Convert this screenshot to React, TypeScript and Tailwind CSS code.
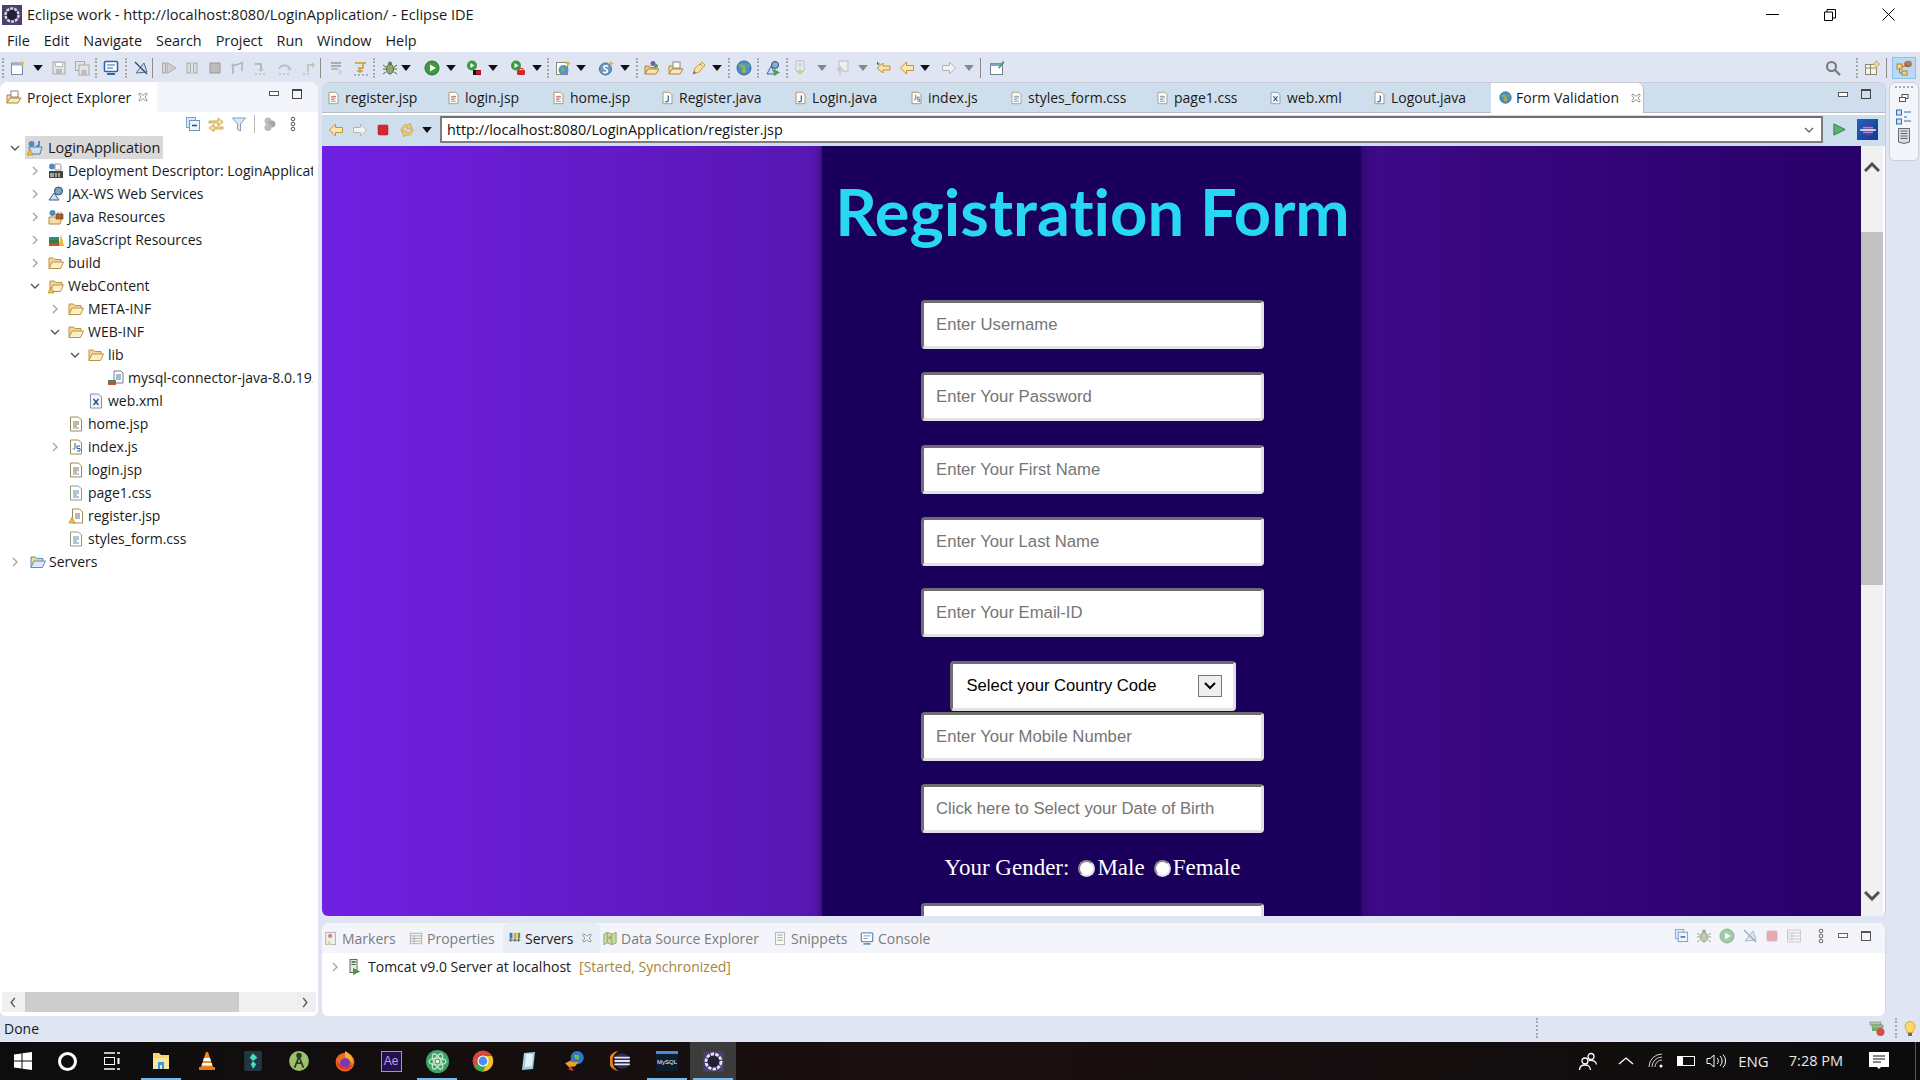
import React from "react";

// --- little eclipse icons, all on a 16x16 box ---
const icons: Record<string, React.ReactNode> = {
  newfile: (<><rect x="1.5" y="3" width="11" height="11.5" fill="#fff" stroke="#7a8ba8" /><rect x="1.5" y="3" width="11" height="2.5" fill="#8fb4dc" /><path d="M12 0.5l1 2 2 1-2 1-1 2-1-2-2-1 2-1z" fill="#e8b93a" /></>),
  save: (<><rect x="2" y="2" width="12" height="12" fill="#e4e4e4" stroke="#aaa" /><rect x="4.5" y="2.5" width="7" height="4" fill="#fff" stroke="#bbb" /><rect x="5" y="9" width="6" height="5" fill="#bbb" /></>),
  saveall: (<><rect x="1.5" y="1.5" width="9" height="9" fill="#e4e4e4" stroke="#aaa" /><rect x="5" y="5" width="10" height="10" fill="#e4e4e4" stroke="#aaa" /><rect x="7.5" y="10" width="5" height="5" fill="#bbb" /></>),
  monitor: (<><rect x="1.5" y="1.5" width="13" height="10" rx="1" fill="#fff" stroke="#2c6aa8" strokeWidth="1.6" /><path d="M4 5h8M4 8h6" stroke="#2c6aa8" /><path d="M4 14h8" stroke="#2c6aa8" strokeWidth="2" /></>),
  skip: (<><path d="M3 13L11 3l3 9z" fill="#cfd8e8" stroke="#4a6a96" /><path d="M2 2l12 12" stroke="#33507a" strokeWidth="1.4" /></>),
  resume: (<><rect x="1.5" y="3" width="3" height="10" fill="#d8d8d8" stroke="#aaa" /><path d="M6 2.5l9 5.5-9 5.5z" fill="#cfcfcf" stroke="#aaa" /></>),
  pause: (<><rect x="3" y="3" width="3.5" height="10" fill="#ddd" stroke="#aaa" /><rect x="9.5" y="3" width="3.5" height="10" fill="#ddd" stroke="#aaa" /></>),
  stopgray: (<rect x="3" y="3" width="10" height="10" fill="#bdbdbd" stroke="#999" />),
  disconnect: (<><path d="M3 14V6l9-3v8" fill="none" stroke="#aaa" strokeWidth="1.3" /><circle cx="3" cy="5" r="1.6" fill="#bbb" /><circle cx="12" cy="3" r="1.6" fill="#bbb" /></>),
  stepinto: (<><path d="M2 4h6v6" fill="none" stroke="#aaa" strokeWidth="1.5" /><path d="M5 9h6l-3 3z" fill="#b9c8b0" /><path d="M2 14h2M6 14h2M10 14h2" stroke="#aaa" /></>),
  stepover: (<><path d="M2 9a6 6 0 0 1 11 0" fill="none" stroke="#bbb" strokeWidth="1.6" /><path d="M10 8h5l-2.500 3z" fill="#b9c8b0" /><path d="M2 14h2M6 14h2M10 14h2" stroke="#aaa" /></>),
  stepret: (<><path d="M7 12V5h6" fill="none" stroke="#bbb" strokeWidth="1.5" /><path d="M11 2l3 3-3 3z" fill="#b9c8b0" /><path d="M2 14h2M6 14h2" stroke="#aaa" /></>),
  dropframe: (<><path d="M2 3h10M2 6h10" stroke="#999" strokeWidth="1.4" /><path d="M2 9h7" stroke="#aaa" strokeWidth="1.4" /><path d="M10 9l4 3-4 3z" fill="#c9d6c0" /></>),
  usefilter: (<><path d="M2 3h11l-3 0v5H5" fill="none" stroke="#c99a2e" strokeWidth="1.5" /><path d="M7 8v5M4 11h6" stroke="#c99a2e" strokeWidth="1.5" /><path d="M1 15h2M5 15h2M9 15h2M13 15h2" stroke="#5b7fb0" /></>),
  debug: (<><ellipse cx="8" cy="9" rx="3.500" ry="5" fill="#8faa6b" stroke="#4f6a3d" /><circle cx="8" cy="3.500" r="2" fill="#5f7c4b" /><path d="M1 5l3 2M15 5l-3 2M1 9h3M15 9h-3M1 14l3-2M15 14l-3-2" stroke="#4f6a3d" /></>),
  run: (<><circle cx="8" cy="8" r="7" fill="#3c9a3f" stroke="#1f6e26" /><path d="M6 4.500l6 3.500-6 3.500z" fill="#fff" /></>),
  runext: (<><circle cx="6" cy="5.500" r="5" fill="#3c9a3f" /><path d="M4.500 3l4 2.500-4 2.500z" fill="#fff" /><rect x="7" y="10" width="8" height="5" fill="#111" /><rect x="10" y="10.500" width="5" height="4" fill="#d12" /></>),
  runtool: (<><circle cx="6" cy="5.500" r="5" fill="#3c9a3f" /><path d="M4.500 3l4 2.500-4 2.500z" fill="#fff" /><rect x="7" y="10" width="8" height="5" rx="1" fill="#cf2a2a" /><path d="M9 10V8.500h4V10" fill="none" stroke="#cf2a2a" /></>),
  newweb: (<><rect x="1.500" y="2.500" width="11" height="12" fill="#fff" stroke="#8a8a6a" /><circle cx="8.500" cy="10" r="5" fill="#5a93c8" /><path d="M6 7l4 1-1 4-3-1z" fill="#79ad59" /><path d="M13 0.500l1 2 2 1-2 1-1 2-1-2-2-1 2-1z" fill="#e8b93a" /></>),
  newserv: (<><circle cx="7.500" cy="9" r="6" fill="#6c9ac6" stroke="#3f6f9e" /><path d="M10 6.500C8 5 5 6 6 8s4 1 3.500 3-3 2-4.500 1" fill="none" stroke="#fff" strokeWidth="1.600" /><path d="M13 0.500l1 2 2 1-2 1-1 2-1-2-2-1 2-1z" fill="#e8b93a" /></>),
  openproj: (<><path d="M1 14V6h4l1 1.500h6V10" fill="#f2cb7c" stroke="#b08432" /><path d="M1 14l3-5h11l-3 5z" fill="#f9e2ae" stroke="#b08432" /><circle cx="9" cy="3.500" r="2.500" fill="#6e5da8" /><circle cx="12" cy="6" r="2" fill="#5a9a4a" /></>),
  opentype: (<><path d="M1 14V6h4l1 1.500h6V10" fill="#f2dca0" stroke="#b08432" /><rect x="5" y="2" width="7" height="6" fill="#fff" stroke="#888" /><path d="M1 14l3-5h11l-3 5z" fill="#f9e9c0" stroke="#b08432" /></>),
  pen: (<><path d="M3 14l2-6 7-6 3 3-6 7z" fill="#f6e0b0" stroke="#c89a40" /><path d="M3 14l3-1.500L4.500 11z" fill="#666" /><path d="M10 4l2 2" stroke="#b38226" /></>),
  globe: (<><circle cx="8" cy="8" r="7" fill="#4f8ec4" stroke="#2c6a9e" /><path d="M4 4l5 1 1 4-3 2-1-3-3-1zM11 3l3 3-2 1z" fill="#7fb25a" /><circle cx="8" cy="11" r="2" fill="#c8a24a" /></>),
  searchweb: (<><path d="M2 14L6 6l4 8z" fill="#cfdcee" stroke="#3a6aa5" /><circle cx="10" cy="5" r="3.500" fill="#7fb0da" stroke="#446" /><path d="M9 9l6 3.500-6 3.500z" fill="#4aa34f" /></>),
  nextann: (<><path d="M3 1h8v10H3z" fill="#eee" stroke="#bbb" /><path d="M7 8v5M4 11l3 3 3-3" fill="none" stroke="#bfcf9f" strokeWidth="1.500" /><path d="M5 4h4M5 6h4" stroke="#bbb" /></>),
  prevann: (<><path d="M5 1h9v10H5z" fill="#eee" stroke="#bbb" /><path d="M6 15V8M3 10l3-3 3 3" fill="none" stroke="#c7c7c7" strokeWidth="1.500" /></>),
  lastedit: (<><path d="M2 8l6-5v3h7v4H8v3z" fill="#f9e3a5" stroke="#c49327" /><path d="M2 1l1 2 2 1-2 1-1-1z" fill="#2a5a98" /></>),
  back: (<path d="M1.500 8l6-6v3.500h7v5h-7V14z" fill="#f9e7b2" stroke="#c8952a" />),
  forward: (<path d="M14.500 8l-6-6v3.500h-7v5h7V14z" fill="#f2f2f2" stroke="#b5b5b5" />),
  pin: (<><rect x="1.500" y="3.500" width="12" height="11" fill="#fff" stroke="#6f7f94" /><rect x="1.500" y="3.500" width="12" height="2.500" fill="#7ba4d0" /><path d="M9 8l5-7 1.500 1.500-5 6z" fill="#4f9b4d" /></>),
  stopred: (<rect x="2.500" y="2.500" width="11" height="11" rx="1" fill="#d8262c" stroke="#a61b20" />),
  refresh: (<><path d="M2 9a6 6 0 0 1 8-6l1-2 2 5-5 1 1-2a4 4 0 0 0-5 4z" fill="#f2cd6c" stroke="#c8952a" strokeWidth=".6" /><path d="M14 7a6 6 0 0 1-8 6l-1 2-2-5 5-1-1 2a4 4 0 0 0 5-4z" fill="#f2cd6c" stroke="#c8952a" strokeWidth=".6" /></>),
  collapse: (<><rect x="1.500" y="1.500" width="9" height="10" fill="#dbe8f7" stroke="#7ba4d0" /><rect x="4.500" y="4.500" width="10" height="10" fill="#eef4fb" stroke="#6c96c4" /><path d="M7 9.500h5" stroke="#18508f" strokeWidth="1.500" /></>),
  link: (<><path d="M1 5h9V2l5 4-5 4V7H1z" fill="#f7e2a4" stroke="#c8952a" strokeWidth=".8" /><path d="M15 11H6V8.500L1 12l5 3.500V13h9z" fill="#f7e2a4" stroke="#c8952a" strokeWidth=".8" /></>),
  filter: (<path d="M1.500 2h13L9.500 8v7l-3-1.500V8z" fill="#dbe8f7" stroke="#7f9dc0" />),
  toggles: (<><circle cx="6" cy="5" r="3.500" fill="#bbb" /><circle cx="10" cy="8" r="3.500" fill="#a8a8a8" /><circle cx="6" cy="11.500" r="3.500" fill="#bbb" /></>),
  dots: (<><circle cx="8" cy="3" r="1.800" fill="none" stroke="#555" /><circle cx="8" cy="8" r="1.800" fill="none" stroke="#555" /><circle cx="8" cy="13" r="1.800" fill="none" stroke="#555" /></>),
  persp: (<><rect x="1.500" y="4.500" width="11" height="10" fill="#f6f3e4" stroke="#8a8a76" /><path d="M1.500 8h11M6.500 4.500v10" stroke="#8a8a76" /><path d="M12.500 0.500l1.500 2.500 2 1-2 1.500-1.500 2-1.500-2-2-1.500 2-1z" fill="#f2d785" stroke="#c49327" strokeWidth=".6" /></>),
  jee: (<><rect x="1" y="4" width="5" height="5" fill="#f3d48a" stroke="#b28324" /><rect x="6" y="11" width="5" height="4" fill="#f3d48a" stroke="#b28324" /><path d="M3.500 9v4H6M6 6.500h3" stroke="#b28324" fill="none" /><ellipse cx="12" cy="4" rx="3.800" ry="3.200" fill="#a8653c" /><path d="M9.500 2l5 4M11 1l4 3" stroke="#e1bd9f" strokeWidth=".6" /></>),
  file: (<><path d="M2.500 1h8l3 3v11h-11z" fill="#fff" stroke="#9a8a5a" /><path d="M5 6h6" stroke="#c74a4a" /><path d="M5 8h6" stroke="#5b8a4a" /><path d="M5 10h4" stroke="#5070b0" /><path d="M5 12h6" stroke="#888" /></>),
  css: (<><path d="M2.500 1h8l3 3v11h-11z" fill="#fff" stroke="#8f9a7a" /><path d="M5 6h6M5 8h6M5 10h4M5 12h6" stroke="#6d8aa8" /></>),
  java: (<><path d="M2.500 1h8l3 3v11h-11z" fill="#fff" stroke="#9a8a5a" /><path d="M9 5v6c0 2-3 2-3.500 1" fill="none" stroke="#2c5a9e" strokeWidth="1.500" /></>),
  js: (<><path d="M2.500 1h8l3 3v11h-11z" fill="#fff" stroke="#9a8a5a" /><path d="M7 4v5c0 1.500-2 1.500-2 .5" fill="none" stroke="#2c5a9e" /><path d="M12 7H9v2.500h3V12H9" fill="none" stroke="#2c5a9e" /></>),
  xml: (<><path d="M2.500 1h8l3 3v11h-11z" fill="#f2f5fa" stroke="#7f90ad" /><path d="M5.500 6l5 6M10.500 6l-5 6" stroke="#2c4670" strokeWidth="1.300" /></>),
  folder: (<><path d="M1 13.500V3h4.500L7 4.500h6V7" fill="#f3d594" stroke="#bd9444" /><path d="M1 13.500L4 7h11.500l-3 6.500z" fill="#fbeec9" stroke="#bd9444" /></>),
  folderwarn: (<><path d="M2 13.500V3h4.500L8 4.500h6V7" fill="#f3d594" stroke="#bd9444" /><path d="M2 13.500L5 7h10.500l-3 6.500z" fill="#fbeec9" stroke="#bd9444" /><path d="M3 9l3 6H0z" fill="#f1c233" stroke="#a8801c" strokeWidth=".6" /></>),
  folderserv: (<><path d="M1 13.500V3h4.500L7 4.500h6V7" fill="#f3d594" stroke="#5e8dc2" /><path d="M1 13.500L4 7h11.500l-3 6.500z" fill="#dbe8f7" stroke="#5e8dc2" /></>),
  project: (<><path d="M2 7h13l-2 7H3z" fill="#cfe0f4" stroke="#4f7fb8" /><circle cx="4.500" cy="4" r="3" fill="#4f8ec4" /><path d="M12 1v4c0 1.500-2 1.500-2.500.5" fill="none" stroke="#2c5a9e" strokeWidth="1.300" /><path d="M3 9l3 6H0z" fill="#f1c233" stroke="#a8801c" strokeWidth=".6" /></>),
  dd: (<><circle cx="4" cy="3.500" r="3" fill="#4f8ec4" /><path d="M7 1h5l1 2v4H7z" fill="#fff" stroke="#999" /><rect x="1" y="8" width="14" height="7" fill="#444" /><path d="M3 10v4M5 10v4M8 10v4M11 10v4" stroke="#fff" /></>),
  jaxws: (<><path d="M1 14L6 7l5 7z" fill="#cfdcee" stroke="#3a5a95" /><circle cx="10.500" cy="5" r="4" fill="#6fa6d4" stroke="#446" /><path d="M9 3l3 1-1 3z" fill="#86b860" /></>),
  javares: (<><circle cx="4.500" cy="4" r="3" fill="#4f8ec4" /><path d="M1 8h13l-2 7H1z" fill="#f5dfa8" stroke="#b58a36" /><path d="M8 5h7v5H8zM10 3v7M13 3v7" fill="#b5702c" stroke="#6e3f14" strokeWidth=".7" /></>),
  jsres: (<><path d="M1 5h10v3H1z" fill="#2b8f89" /><path d="M1 8h10v3H1z" fill="#3a7a3a" /><path d="M1 11h11v3H1z" fill="#c4532c" /><path d="M11 14l2-12 3 12z" fill="#e6b83c" /></>),
  jar: (<><path d="M6 1h7l2 2v10H6z" fill="#fff" stroke="#7a7a7a" /><path d="M8 5h5M8 7h5M8 9h5" stroke="#5070b0" /><path d="M0 10h8v2H0z" fill="#2b8f89" /><path d="M0 12h8v3H0z" fill="#c4532c" /></>),
  jspwarn: (<><path d="M4.500 1h7l3 3v11h-10z" fill="#fff" stroke="#9a8a5a" /><path d="M7 6h5" stroke="#c74a4a" /><path d="M7 8h5" stroke="#5b8a4a" /><path d="M7 10h5" stroke="#5070b0" /><path d="M4 9l3 6H1z" fill="#f1c233" stroke="#a8801c" strokeWidth=".6" /></>),
  markers: (<><rect x="2" y="1" width="11" height="14" fill="#f0f0f0" stroke="#aaa" /><circle cx="7" cy="5" r="2.500" fill="#d88" /><path d="M6 9l3 6H3z" fill="#ecd38a" /></>),
  props: (<><rect x="1.500" y="2" width="13" height="12" fill="#f4f4f4" stroke="#aaa" /><path d="M1.500 5h13M1.500 8h13M1.500 11h13M6 5v9" stroke="#aaa" /></>),
  servers: (<><rect x="2" y="1" width="3.500" height="7" fill="#3a78b8" /><rect x="7" y="1" width="3.500" height="7" fill="#d9a531" /><rect x="12" y="1" width="3" height="7" fill="#5b9a4a" /><path d="M1 10h14M3.500 8v4M8.500 8v4M13 8v4" stroke="#444" /></>),
  dse: (<><path d="M1 3l4-2 5 2 5-2v12l-5 2-5-2-4 2z" fill="#c4dca0" stroke="#8aa36a" /><path d="M5 1v12M10 3v12" stroke="#8aa36a" /><circle cx="8" cy="7" r="2" fill="#b8a36a" /></>),
  snippets: (<><rect x="3" y="1" width="10" height="14" fill="#fafafa" stroke="#aaa" /><path d="M5 4h6" stroke="#6c9ac6" /><path d="M5 7h6" stroke="#c8953a" /><path d="M5 10h6" stroke="#79a35b" /></>),
  console: (<><rect x="1.500" y="1.500" width="13" height="10" rx="1" fill="#fff" stroke="#6b93bd" strokeWidth="1.500" /><path d="M4 5h8M4 8h5" stroke="#6b93bd" /><path d="M4 14h8" stroke="#6b93bd" strokeWidth="2" /></>),
  tomcat: (<><rect x="4" y="0.500" width="7" height="13" fill="#e8e8e8" stroke="#666" /><rect x="5.500" y="2" width="4" height="2" fill="#3c9a3f" /><rect x="5.500" y="5" width="4" height="1" fill="#555" /><path d="M7 9l7 3.500L7 16z" fill="#3c9a3f" /></>),
};

function Ic({ n, cls = "w-4 h-4" }: { n: string; cls?: string }) {
  return (
    <svg viewBox="0 0 16 16" className={`${cls} shrink-0`}>
      {icons[n]}
    </svg>
  );
}

function Caret({ gray }: { gray?: boolean }) {
  return (
    <svg viewBox="0 0 8 5" className="w-[10px] h-[6px] shrink-0">
      <path d="M0 0h8L4 5z" fill={gray ? "#888" : "#111"} />
    </svg>
  );
}

function Grip() {
  return <div className="h-[20px] w-0 border-l-2 border-dotted border-[#a9a9a9] shrink-0" />;
}

function Sep() {
  return <div className="h-[20px] w-px bg-[#8d8d8d] shrink-0" />;
}

function MinMax() {
  return (
    <div className="flex items-center gap-[13px]">
      <div className="w-[10px] h-[5px] border border-[#555] bg-white" />
      <div className="w-[10px] h-[10px] border border-[#444] border-t-[2px]" />
    </div>
  );
}

function CloseX({ cls = "" }: { cls?: string }) {
  return (
    <svg viewBox="0 0 10 10" className={`w-[10px] h-[10px] shrink-0 ${cls}`}>
      <path d="M1.500 1l2 1L5 3.500 6.500 2l2-1 .5 1.500-2 2.500 2 2.500L8.500 9l-2-1L5 6.500 3.500 8l-2 1L1 7.500l2-2.500L1 2.500z" fill="#fff" stroke="#777" strokeWidth=".8" />
    </svg>
  );
}

function Chevron({ open }: { open?: boolean }) {
  return (
    <svg viewBox="0 0 10 10" className="w-[10px] h-[10px] shrink-0">
      <path d={open ? "M1 3l4 4 4-4" : "M3 1l4 4-4 4"} fill="none" stroke={open ? "#555" : "#a5a5a5"} strokeWidth="1.400" />
    </svg>
  );
}

const tree: { t: string; i: string; d: number; a?: "o" | "c" }[] = [
  { t: "Deployment Descriptor: LoginApplication", i: "dd", d: 1, a: "c" },
  { t: "JAX-WS Web Services", i: "jaxws", d: 1, a: "c" },
  { t: "Java Resources", i: "javares", d: 1, a: "c" },
  { t: "JavaScript Resources", i: "jsres", d: 1, a: "c" },
  { t: "build", i: "folder", d: 1, a: "c" },
  { t: "WebContent", i: "folderwarn", d: 1, a: "o" },
  { t: "META-INF", i: "folder", d: 2, a: "c" },
  { t: "WEB-INF", i: "folder", d: 2, a: "o" },
  { t: "lib", i: "folder", d: 3, a: "o" },
  { t: "mysql-connector-java-8.0.19.jar", i: "jar", d: 4 },
  { t: "web.xml", i: "xml", d: 3 },
  { t: "home.jsp", i: "file", d: 2 },
  { t: "index.js", i: "js", d: 2, a: "c" },
  { t: "login.jsp", i: "file", d: 2 },
  { t: "page1.css", i: "css", d: 2 },
  { t: "register.jsp", i: "jspwarn", d: 2 },
  { t: "styles_form.css", i: "css", d: 2 },
];

const depthPad: Record<number, string> = { 1: "pl-[30px]", 2: "pl-[50px]", 3: "pl-[70px]", 4: "pl-[90px]" };

const editorTabs: { t: string; i: string; w: string }[] = [
  { t: "register.jsp", i: "file", w: "w-[120px]" },
  { t: "login.jsp", i: "file", w: "w-[105px]" },
  { t: "home.jsp", i: "file", w: "w-[109px]" },
  { t: "Register.java", i: "java", w: "w-[133px]" },
  { t: "Login.java", i: "java", w: "w-[116px]" },
  { t: "index.js", i: "js", w: "w-[100px]" },
  { t: "styles_form.css", i: "css", w: "w-[146px]" },
  { t: "page1.css", i: "css", w: "w-[113px]" },
  { t: "web.xml", i: "xml", w: "w-[104px]" },
  { t: "Logout.java", i: "java", w: "w-[122px]" },
];

function FormInput({ ph, cls }: { ph: string; cls: string }) {
  return (
    <input
      readOnly
      placeholder={ph}
      className={`w-[343px] h-[49px] shrink-0 bg-white rounded-[4px] border-[3px] border-t-[#6e6e6e] border-l-[#6e6e6e] border-r-[#e2e2e2] border-b-[#e2e2e2] px-[12px] text-[16.700px] placeholder:text-[#757575] font-['Liberation_Sans',sans-serif] ${cls}`}
    />
  );
}

function Radio() {
  return <div className="w-[17px] h-[17px] rounded-full bg-white border-[2px] border-[#8c8c8c] border-r-[#dedede] border-b-[#dedede] shrink-0" />;
}

function Toolbar() {
  return (
    <div className="h-[30px] shrink-0 flex items-center pl-[2px] pr-[4px] pt-[1px]">
      <Grip />
      <div className="ml-[6px] w-[23px]"><Ic n="newfile" /></div>
      <Caret />
      <div className="ml-[8px] w-[23px]"><Ic n="save" /></div>
      <div className="w-[21px]"><Ic n="saveall" /></div>
      <Grip />
      <div className="ml-[6px] w-[22px]"><Ic n="monitor" /></div>
      <Grip />
      <div className="ml-[6px] w-[19px]"><Ic n="skip" /></div>
      <Sep />
      <div className="ml-[8px] w-[23px]"><Ic n="resume" /></div>
      <div className="w-[23px]"><Ic n="pause" /></div>
      <div className="w-[23px]"><Ic n="stopgray" /></div>
      <div className="w-[23px]"><Ic n="disconnect" /></div>
      <div className="w-[24px]"><Ic n="stepinto" /></div>
      <div className="w-[24px]"><Ic n="stepover" /></div>
      <div className="w-[19px]"><Ic n="stepret" /></div>
      <Sep />
      <div className="ml-[8px] w-[24px]"><Ic n="dropframe" /></div>
      <div className="w-[20px]"><Ic n="usefilter" /></div>
      <Grip />
      <div className="ml-[7px] w-[19px]"><Ic n="debug" /></div>
      <Caret />
      <div className="ml-[13px] w-[22px]"><Ic n="run" /></div>
      <Caret />
      <div className="ml-[10px] w-[22px]"><Ic n="runext" /></div>
      <Caret />
      <div className="ml-[12px] w-[22px]"><Ic n="runtool" /></div>
      <Caret />
      <div className="ml-[5px]"><Grip /></div>
      <div className="ml-[6px] w-[21px]"><Ic n="newweb" /></div>
      <Caret />
      <div className="ml-[12px] w-[22px]"><Ic n="newserv" /></div>
      <Caret />
      <div className="ml-[6px]"><Grip /></div>
      <div className="ml-[6px] w-[24px]"><Ic n="openproj" /></div>
      <div className="w-[22px]"><Ic n="opentype" /></div>
      <div className="w-[22px]"><Ic n="pen" /></div>
      <Caret />
      <div className="ml-[6px]"><Grip /></div>
      <div className="ml-[6px] w-[21px]"><Ic n="globe" /></div>
      <Grip />
      <div className="ml-[6px] w-[21px]"><Ic n="searchweb" /></div>
      <Grip />
      <div className="ml-[5px] w-[24px]"><Ic n="nextann" /></div>
      <Caret gray />
      <div className="ml-[7px] w-[24px]"><Ic n="prevann" /></div>
      <Caret gray />
      <div className="ml-[7px] w-[24px]"><Ic n="lastedit" /></div>
      <div className="w-[21px]"><Ic n="back" /></div>
      <Caret />
      <div className="ml-[11px] w-[23px]"><Ic n="forward" /></div>
      <Caret gray />
      <div className="ml-[6px]"><Sep /></div>
      <div className="ml-[8px]"><Ic n="pin" /></div>
      <div className="flex-1" />
      <svg viewBox="0 0 16 16" className="w-[16px] h-[16px] mr-[15px]">
        <circle cx="6.500" cy="6.500" r="4.500" fill="none" stroke="#777" strokeWidth="2" />
        <path d="M10 10l5 5" stroke="#777" strokeWidth="2.200" />
      </svg>
      <Grip />
      <div className="ml-[6px] mr-[6px]"><Ic n="persp" /></div>
      <Sep />
      <div className="ml-[5px] w-[24px] h-[22px] flex items-center justify-center bg-[#b9daf7] border border-[#8fc0ee]">
        <Ic n="jee" />
      </div>
    </div>
  );
}

function ProjectExplorer() {
  return (
    <div className="w-[318px] shrink-0 bg-white rounded-t-[8px] rounded-b-[6px] flex flex-col overflow-hidden">
      <div className="h-[30px] shrink-0 bg-[#f3f5fb] flex items-center">
        <div className="h-full w-[157px] bg-white rounded-tl-[8px] flex items-center pl-[6px] gap-[5px]">
          <Ic n="opentype" />
          <span className="text-[#1a1a1a]">Project Explorer</span>
          <CloseX cls="ml-[2px]" />
        </div>
        <div className="flex-1" />
        <div className="mr-[16px] pb-[7px]"><MinMax /></div>
      </div>
      <div className="h-[24px] shrink-0 flex items-center justify-end gap-[7px] pr-[17px]">
        <Ic n="collapse" />
        <Ic n="link" />
        <Ic n="filter" />
        <div className="h-[18px] w-px bg-[#bbb]" />
        <Ic n="toggles" />
        <Ic n="dots" />
      </div>
      <div className="flex-1 min-h-0 overflow-hidden pr-[5px]">
        <div className="h-[23px] flex items-center pl-[10px]">
          <Chevron open />
          <div className="ml-[5px] h-[23px] flex items-center gap-[5px] bg-[#d9d9d9] pr-[3px] pl-[2px]">
            <Ic n="project" />
            <span className="text-[14.500px] text-[#1a1a1a]">LoginApplication</span>
          </div>
        </div>
        {tree.map((row) => (
          <div key={row.t} className={`h-[23px] flex items-center whitespace-nowrap overflow-hidden ${depthPad[row.d]}`}>
            <div className="w-[18px] shrink-0">
              {row.a ? <Chevron open={row.a === "o"} /> : null}
            </div>
            <Ic n={row.i} />
            <span className="ml-[4px] text-[#1a1a1a]">{row.t}</span>
          </div>
        ))}
        <div className="h-[23px] flex items-center pl-[10px]">
          <div className="w-[20px]"><Chevron /></div>
          <Ic n="folderserv" />
          <span className="ml-[3px] text-[#1a1a1a]">Servers</span>
        </div>
      </div>
      <div className="h-[20px] shrink-0 mx-[2px] mb-[4px] bg-[#f0f0f0] flex items-center justify-between">
        <svg viewBox="0 0 8 12" className="w-[8px] h-[11px] ml-[7px]"><path d="M6 1L2 6l4 5" fill="none" stroke="#555" strokeWidth="1.500" /></svg>
        <div className="h-full w-[214px] bg-[#cdcdcd] ml-[8px] mr-auto" />
        <svg viewBox="0 0 8 12" className="w-[8px] h-[11px] mr-[7px]"><path d="M2 1l4 5-4 5" fill="none" stroke="#555" strokeWidth="1.500" /></svg>
      </div>
    </div>
  );
}

function BrowserPage() {
  return (
    <div className="flex-1 min-h-0 flex overflow-hidden mr-[2px]">
      <div className="flex-1 min-w-0 overflow-hidden flex justify-center bg-gradient-to-r from-[#7020e2] via-[#4b1199] to-[#270068]">
        <div className="w-[539px] shrink-0 h-[900px] pl-[2px] bg-[#1a005c] shadow-[0_0_10px_rgba(20,0,60,0.75)] flex flex-col items-center">
          <h1 className="mt-[23px] h-[84px] text-[65px] leading-[84px] font-bold text-[#28d7f4] [font-variant-ligatures:none] font-['Lato',sans-serif]">Registration Form</h1>
          <FormInput ph="Enter Username" cls="mt-[47px]" />
          <FormInput ph="Enter Your Password" cls="mt-[23px]" />
          <FormInput ph="Enter Your First Name" cls="mt-[24px]" />
          <FormInput ph="Enter Your Last Name" cls="mt-[23px]" />
          <FormInput ph="Enter Your Email-ID" cls="mt-[22px]" />
          <div className="mt-[24px] w-[286px] h-[50px] shrink-0 bg-white rounded-[4px] border-[3px] border-t-[#6e6e6e] border-l-[#6e6e6e] border-r-[#e2e2e2] border-b-[#e2e2e2] flex items-center pl-[14px] pr-[11px] justify-between text-[16.600px] text-black font-['Liberation_Sans',sans-serif]">
            <span>Select your Country Code</span>
            <div className="w-[24px] h-[22px] bg-[#efefef] border border-[#767676] flex items-center justify-center">
              <svg viewBox="0 0 12 8" className="w-[12px] h-[8px]"><path d="M1 1l5 5 5-5" fill="none" stroke="#000" strokeWidth="2" /></svg>
            </div>
          </div>
          <FormInput ph="Enter Your Mobile Number" cls="mt-[1px]" />
          <FormInput ph="Click here to Select your Date of Birth" cls="mt-[23px]" />
          <div className="mt-[20px] h-[30px] flex items-center text-white text-[23px] font-['Liberation_Serif',serif]">
            <span>Your Gender:</span>
            <div className="ml-[9px]"><Radio /></div>
            <span className="ml-[2px]">Male</span>
            <div className="ml-[9px]"><Radio /></div>
            <span className="ml-[2px]">Female</span>
          </div>
          <FormInput ph="" cls="mt-[20px]" />
        </div>
      </div>
      <div className="w-[22px] shrink-0 bg-[#f1f1f1] flex flex-col items-center">
        <div className="h-[40px] shrink-0 flex items-center justify-center pt-[2px]">
          <svg viewBox="0 0 16 10" className="w-[16px] h-[10px]"><path d="M1 9l7-7 7 7" fill="none" stroke="#505050" strokeWidth="3" /></svg>
        </div>
        <div className="mt-[46px] h-[353px] w-full bg-[#c1c1c1] shrink-0" />
        <div className="flex-1" />
        <div className="h-[40px] shrink-0 flex items-center justify-center">
          <svg viewBox="0 0 16 10" className="w-[16px] h-[10px]"><path d="M1 1l7 7 7-7" fill="none" stroke="#505050" strokeWidth="3" /></svg>
        </div>
      </div>
    </div>
  );
}

function EditorArea() {
  return (
    <div className="h-[834px] shrink-0 bg-white border-t border-[#c8cdd8] border-r border-r-[#c8cdd8] rounded-t-[8px] rounded-b-[6px] flex flex-col overflow-hidden">
      <div className="h-[30px] shrink-0 bg-[#cfdeed] flex items-center border-b border-[#b4bdc9]">
        <div className="w-[1px]" />
        {editorTabs.map((tab) => (
          <div key={tab.t} className={`${tab.w} h-full flex items-center gap-[5px] shrink-0 pl-[4px]`}>
            <Ic n={tab.i} cls="w-[13px] h-[14px]" />
            <span className="text-[#1a1a1a]">{tab.t}</span>
          </div>
        ))}
        <div className="w-[153px] h-[30px] bg-white border-r border-[#b4bdc9] rounded-tr-[6px] flex items-center pl-[8px] gap-[4px] shrink-0">
          <Ic n="globe" cls="w-[13px] h-[13px]" />
          <span className="text-[#1a1a1a]">Form Validation</span>
          <CloseX cls="ml-[8px]" />
        </div>
        <div className="flex-1" />
        <div className="mr-[14px] pb-[7px]"><MinMax /></div>
      </div>
      <div className="h-[33px] shrink-0 bg-[#cfdeed] flex items-center pl-[6px] pr-[6px] pb-[2px] border-t-[2px] border-white">
        <Ic n="back" />
        <div className="ml-[8px]"><Ic n="forward" /></div>
        <div className="ml-[8px]"><Ic n="stopred" cls="w-[14px] h-[14px]" /></div>
        <div className="ml-[9px]"><Ic n="refresh" /></div>
        <div className="ml-[7px]"><Caret /></div>
        <div className="ml-[8px] w-[1383px] h-[27px] shrink-0 bg-white border-2 border-[#7d7d7d] border-t-[#6f6f6f] flex items-center justify-between pl-[5px] pr-[7px]">
          <span className="text-[14.400px] text-[#111]">http://localhost:8080/LoginApplication/register.jsp</span>
          <svg viewBox="0 0 10 6" className="w-[10px] h-[6px]"><path d="M1 1l4 4 4-4" fill="none" stroke="#555" strokeWidth="1.200" /></svg>
        </div>
        <svg viewBox="0 0 16 16" className="ml-[9px] w-[15px] h-[15px] shrink-0"><path d="M2 2l12 6-12 6z" fill="#5cb36b" stroke="#2f8040" /></svg>
        <div className="ml-[10px] w-[21px] h-[21px] bg-gradient-to-br from-[#1f63c4] to-[#123a8e] flex items-center justify-center shrink-0">
          <svg viewBox="0 0 16 16" className="w-[18px] h-[18px]">
            <circle cx="8" cy="8" r="5" fill="#5b3f97" />
            <path d="M3.500 6h9M3.500 10h9" stroke="#c9b8e8" strokeWidth=".8" />
            <path d="M1 8h14" stroke="#fff" strokeWidth="1.300" />
          </svg>
        </div>
      </div>
      <BrowserPage />
    </div>
  );
}

const bottomTabs: { t: string; i: string; w: string }[] = [
  { t: "Markers", i: "markers", w: "w-[85px]" },
  { t: "Properties", i: "props", w: "w-[94px]" },
];

const bottomTabsRight: { t: string; i: string; w: string }[] = [
  { t: "Data Source Explorer", i: "dse", w: "w-[170px]" },
  { t: "Snippets", i: "snippets", w: "w-[87px]" },
  { t: "Console", i: "console", w: "w-[80px]" },
];

function ServersPanel() {
  return (
    <div className="mt-[7px] flex-1 min-h-0 bg-white rounded-t-[8px] rounded-b-[6px] border-r border-[#d5dae5] flex flex-col overflow-hidden">
      <div className="h-[30px] shrink-0 bg-[#f3f5fb] flex items-center pl-[2px]">
        {bottomTabs.map((tab) => (
          <div key={tab.t} className={`${tab.w} flex items-center gap-[4px] shrink-0`}>
            <Ic n={tab.i} cls="w-[14px] h-[15px]" />
            <span className="text-[#7b7b7b]">{tab.t}</span>
          </div>
        ))}
        <div className="w-[97px] h-full bg-[#e8eef5] rounded-t-[6px] flex items-center gap-[4px] pl-[5px] shrink-0">
          <Ic n="servers" cls="w-[13px] h-[13px]" />
          <span className="text-[#1a1a1a]">Servers</span>
          <CloseX cls="ml-[4px]" />
        </div>
        <div className="w-[3px]" />
        {bottomTabsRight.map((tab) => (
          <div key={tab.t} className={`${tab.w} flex items-center gap-[4px] shrink-0`}>
            <Ic n={tab.i} cls="w-[14px] h-[15px]" />
            <span className="text-[#7b7b7b]">{tab.t}</span>
          </div>
        ))}
        <div className="flex-1" />
        <div className="flex items-center gap-[7px] mr-[14px] pb-[5px] opacity-90">
          <Ic n="collapse" cls="w-[15px] h-[15px]" />
          <div className="opacity-60"><Ic n="debug" /></div>
          <div className="opacity-50"><Ic n="run" /></div>
          <div className="opacity-50"><Ic n="skip" /></div>
          <div className="opacity-40"><Ic n="stopred" cls="w-[14px] h-[14px]" /></div>
          <div className="opacity-60"><Ic n="props" /></div>
          <div className="ml-[4px]"><Ic n="dots" /></div>
          <div className="ml-[2px]"><MinMax /></div>
        </div>
      </div>
      <div className="h-[27px] shrink-0 flex items-center pl-[8px]">
        <Chevron />
        <div className="ml-[6px]"><Ic n="tomcat" /></div>
        <span className="ml-[6px] text-[#1a1a1a]">Tomcat v9.0 Server at localhost</span>
        <span className="ml-[8px] text-[#a8843c]">[Started, Synchronized]</span>
      </div>
    </div>
  );
}

function RightTrim() {
  return (
    <div className="w-[34px] shrink-0 pl-[3px] pr-[1px]">
      <div className="h-[79px] bg-[#f3f5fb] border border-[#c8cdd8] border-l-[#c8cdd8] rounded-[6px] flex flex-col items-center pt-[3px] gap-[3px]">
        <div className="w-[18px] h-0 border-t-2 border-dotted border-[#aaa]" />
        <svg viewBox="0 0 10 8" className="w-[10px] h-[8px] mt-[3px]"><rect x="3" y=".5" width="6" height="4" fill="#fff" stroke="#555" /><rect x=".5" y="3.500" width="6" height="4" fill="#fff" stroke="#555" /></svg>
        <svg viewBox="0 0 16 16" className="w-[16px] h-[16px] mt-[4px]"><rect x=".5" y="1" width="5" height="5" fill="#cfe0f4" stroke="#2c6fb8" /><rect x=".5" y="10" width="5" height="5" fill="#cfe0f4" stroke="#2c6fb8" /><path d="M8 3h7M8 12h7M8 8h3" stroke="#2c6fb8" /></svg>
        <svg viewBox="0 0 12 16" className="w-[12px] h-[16px]"><path d="M.5.5h11V14l-5.500 1.500L.5 14z" fill="#dcdce8" stroke="#666" /><path d="M2.500 3h7M2.500 5.500h7M2.500 8h7M2.500 10.500h7" stroke="#666" /></svg>
      </div>
    </div>
  );
}

function StatusBar() {
  return (
    <div className="h-[26px] shrink-0 flex items-center pl-[4px] pr-[4px] pb-[2px] text-[#1a1a1a]">
      <span>Done</span>
      <div className="ml-[1497px]"><Grip /></div>
      <div className="flex-1" />
      <svg viewBox="0 0 16 16" className="w-[16px] h-[16px] mr-[10px]">
        <path d="M1 2h11v3H1z" fill="#b7c9b0" stroke="#6e8a66" strokeWidth=".6" />
        <path d="M3 5h11v3H3z" fill="#8fc08f" stroke="#6e8a66" strokeWidth=".6" />
        <path d="M3 8h9v3H3z" fill="#6fae6f" />
        <circle cx="11.500" cy="12" r="4" fill="#d94a4a" />
      </svg>
      <Grip />
      <svg viewBox="0 0 12 16" className="ml-[7px] w-[12px] h-[17px]">
        <path d="M6 1a5 5 0 0 0-3 9v2h6v-2a5 5 0 0 0-3-9z" fill="#fbd96b" stroke="#e3a92a" />
        <rect x="4" y="12.500" width="4" height="3" fill="#5f6f86" />
      </svg>
    </div>
  );
}

function TaskIcon({ children, on, active }: { children: React.ReactNode; on?: boolean; active?: boolean }) {
  return (
    <div className={`relative w-[46px] h-full flex items-center justify-center shrink-0 ${active ? "bg-[#3b3b3b]" : ""}`}>
      {children}
      {on ? <div className="absolute bottom-0 inset-x-[3px] h-[2px] bg-[#76b9ed]" /> : null}
    </div>
  );
}

function Taskbar() {
  return (
    <div className="h-[38px] shrink-0 bg-gradient-to-r from-[#0d0d0d] via-[#1b0f11] to-[#0c0c0c] flex items-center text-white">
      <TaskIcon>
        <svg viewBox="0 0 20 20" className="w-[20px] h-[20px]"><path d="M1 3.500L8.500 2.500V9.500H1zM9.500 2.300L19 1V9.500H9.500zM1 10.500H8.500V17.500L1 16.500zM9.500 10.500H19V19L9.500 17.700z" fill="#fff" /></svg>
      </TaskIcon>
      <TaskIcon>
        <div className="w-[19px] h-[19px] mr-[4px] rounded-full border-[3px] border-white" />
      </TaskIcon>
      <TaskIcon>
        <svg viewBox="0 0 20 20" className="w-[20px] h-[20px] mr-[6px]"><path d="M2 2h11M2 18h11M15 2h3M15 18h3" stroke="#fff" strokeWidth="1.500" /><rect x="2.500" y="6.500" width="10" height="7" fill="none" stroke="#fff" /><path d="M16.500 7v6" stroke="#fff" strokeWidth="2" /></svg>
      </TaskIcon>
      <TaskIcon on>
        <svg viewBox="0 0 20 20" className="w-[20px] h-[20px]"><path d="M2 2h6l2 2h8v14H2z" fill="#f7d774" /><path d="M2 7h16v11H2z" fill="#fbe59a" /><path d="M7 18v-7h6v7h-2v-4H9v4z" fill="#2d9fe0" /></svg>
      </TaskIcon>
      <TaskIcon>
        <svg viewBox="0 0 20 20" className="w-[20px] h-[20px]"><path d="M9 1h2l5 15H4z" fill="#f08a1d" /><path d="M7 7h6l1 3H6zM5.500 12h9l1 2.500h-11z" fill="#fff" /><path d="M2 16h16v3H2z" fill="#e8791a" /></svg>
      </TaskIcon>
      <TaskIcon>
        <svg viewBox="0 0 20 20" className="w-[22px] h-[22px]"><rect x="2" y="1" width="16" height="18" rx="1" fill="#223742" /><path d="M10 3l4 4-4 3-3-3zM10 10l3 3-3 4-2-4z" fill="#41e0c0" /></svg>
      </TaskIcon>
      <TaskIcon>
        <svg viewBox="0 0 20 20" className="w-[22px] h-[22px]"><circle cx="10" cy="10" r="9" fill="#9cc06a" /><path d="M6 16l4-10 4 10M7 12h6" fill="none" stroke="#2c3b2a" strokeWidth="1.600" /><circle cx="10" cy="5" r="2.500" fill="#2c3b2a" /></svg>
      </TaskIcon>
      <TaskIcon>
        <svg viewBox="0 0 20 20" className="w-[22px] h-[22px]"><circle cx="10" cy="11" r="8.500" fill="#ef6a1f" /><path d="M10 1c4 2 8 5 7 12-2-5-5-6-7-6z" fill="#fcb02e" /><circle cx="10" cy="12" r="4.500" fill="#6d3cc0" /><path d="M2 10c1 5 4 8 8 8s6-2 7-5c-2 2-5 3-8 2s-5-3-7-5z" fill="#e2352f" /></svg>
      </TaskIcon>
      <TaskIcon>
        <div className="w-[21px] h-[21px] bg-[#24104a] border border-[#a58bf0] text-[#b8a2ff] text-[12px] font-['Liberation_Sans',sans-serif] flex items-center justify-center">Ae</div>
      </TaskIcon>
      <TaskIcon on>
        <svg viewBox="0 0 20 20" className="w-[23px] h-[23px]"><circle cx="10" cy="10" r="10" fill="#3da56a" /><ellipse cx="10" cy="10" rx="7.500" ry="3" fill="none" stroke="#cfe8d0" /><ellipse cx="10" cy="10" rx="7.500" ry="3" transform="rotate(60 10 10)" fill="none" stroke="#cfe8d0" /><ellipse cx="10" cy="10" rx="7.500" ry="3" transform="rotate(120 10 10)" fill="none" stroke="#cfe8d0" /><circle cx="10" cy="10" r="1.500" fill="#fff" /></svg>
      </TaskIcon>
      <TaskIcon>
        <svg viewBox="0 0 20 20" className="w-[22px] h-[22px]"><circle cx="10" cy="10" r="9.500" fill="#d9463a" /><path d="M10 10L2 15a9.500 9.500 0 0 0 8 4.500 9.500 9.500 0 0 0 8-14H10z" fill="#f2c02e" /><path d="M10 10L2 15a9.500 9.500 0 0 0 8 4.500l4-8z" fill="#3aa54f" /><circle cx="10" cy="10" r="4.500" fill="#4a8df0" stroke="#fff" /></svg>
      </TaskIcon>
      <TaskIcon>
        <svg viewBox="0 0 20 20" className="w-[20px] h-[22px]"><path d="M5 2l11-1-2 17-11 1z" fill="#9fd0e0" /><path d="M7 3l7 0-1 12-7 1z" fill="#dff1f6" /></svg>
      </TaskIcon>
      <TaskIcon>
        <svg viewBox="0 0 20 20" className="w-[22px] h-[22px]"><circle cx="12" cy="7" r="6" fill="#2e78c7" /><path d="M9 4l5 1-1 4-3-1z" fill="#78b94e" /><path d="M1 12l6-3v2h6l-3 4H7v3z" fill="#e2a32a" /><path d="M6 14l3 5-5-1z" fill="#d8322c" /></svg>
      </TaskIcon>
      <TaskIcon>
        <svg viewBox="0 0 20 20" className="w-[22px] h-[22px]"><path d="M8 1a9 9 0 0 0 0 18 10 10 0 0 1 0-18z" fill="#e8811a" /><circle cx="11" cy="10" r="7" fill="#2f2a5c" /><path d="M4 7h14M4 10h14M4 13h14" stroke="#e6e6ee" strokeWidth="1.600" /></svg>
      </TaskIcon>
      <TaskIcon on>
        <div className="w-[22px] h-[20px] bg-[#0d1c2e] border-t-[3px] border-[#4b8bd0] text-white text-[6px] leading-[16px] font-['Liberation_Sans',sans-serif] text-center">MySQL</div>
      </TaskIcon>
      <TaskIcon on active>
        <svg viewBox="0 0 20 20" className="w-[23px] h-[23px]">
          <rect x="1" y="1" width="18" height="18" fill="#4b3f73" />
          <circle cx="10" cy="10" r="6.500" fill="#23203c" stroke="#e6e6e6" strokeWidth="2.500" strokeDasharray="3 1" />
        </svg>
      </TaskIcon>
      <div className="flex-1" />
      <svg viewBox="0 0 20 20" className="w-[20px] h-[20px] mr-[20px]"><circle cx="7" cy="10" r="3" fill="none" stroke="#fff" strokeWidth="1.300" /><circle cx="13" cy="5.500" r="3" fill="none" stroke="#fff" strokeWidth="1.300" /><path d="M1.500 19c0-4 2-5 5.500-5s5 1 5.500 5M11 9.500c4-.5 7 1 7.500 4" fill="none" stroke="#fff" strokeWidth="1.300" /></svg>
      <svg viewBox="0 0 16 8" className="w-[16px] h-[8px] mr-[14px]"><path d="M1 7l7-6 7 6" fill="none" stroke="#fff" strokeWidth="1.300" /></svg>
      <svg viewBox="0 0 16 16" className="w-[16px] h-[16px] mr-[13px]"><path d="M1 14a13 13 0 0 1 13-13M4 14A10 10 0 0 1 14 4M7 14a7 7 0 0 1 7-7" fill="none" stroke="#cfcfcf" /><circle cx="13" cy="13" r="1.500" fill="#fff" /></svg>
      <div className="w-[18px] h-[10px] border border-white flex mr-[11px]"><div className="w-[5px] bg-white" /></div>
      <svg viewBox="0 0 20 14" className="w-[20px] h-[14px] mr-[12px]"><path d="M1 4.500h3l4-3.500v12l-4-3.500H1z" fill="none" stroke="#fff" /><path d="M11 4a4 4 0 0 1 0 6M14 2a7 7 0 0 1 0 10M17 .5a9.500 9.500 0 0 1 0 13" fill="none" stroke="#fff" /></svg>
      <span className="text-[15px] text-[#e8e8e8] mr-[20px]">ENG</span>
      <span className="text-[14.500px] text-[#e8e8e8] mr-[26px]">7:28 PM</span>
      <svg viewBox="0 0 20 20" className="w-[20px] h-[20px]"><path d="M0 1h20v15h-8l-2 2-2-2H0z" fill="#fff" /><path d="M4 5h12M4 8h12M4 11h8" stroke="#111" /></svg>
      <div className="w-px h-full bg-[#555] ml-[26px] mr-[4px]" />
    </div>
  );
}

export default function App() {
  return (
    <div className="w-[1920px] h-[1080px] overflow-hidden flex flex-col bg-[#dfe5f3] text-[14px] font-['Open_Sans',sans-serif]">
      <div className="bg-white shrink-0 h-[52px] flex flex-col">
        <div className="h-[27px] flex items-center pl-[2px] pt-[2px]">
          <svg viewBox="0 0 20 20" className="w-[20px] h-[20px]">
            <rect width="20" height="20" fill="#4b3f73" />
            <circle cx="10" cy="10" r="6.500" fill="#23203c" stroke="#d9d9d9" strokeWidth="2.500" strokeDasharray="3 1" />
          </svg>
          <span className="ml-[5px] text-[14.600px] text-[#1a1a1a]">Eclipse work - http://localhost:8080/LoginApplication/ - Eclipse IDE</span>
          <div className="flex-1" />
          <div className="w-[13px] h-px bg-black mr-[45px]" />
          <svg viewBox="0 0 12 12" className="w-[12px] h-[12px] mr-[46px]"><path d="M.5 3h8v8.500h-8zM3 3V.5h8.500V9H9" fill="none" stroke="#000" /></svg>
          <svg viewBox="0 0 13 13" className="w-[13px] h-[13px] mr-[25px]"><path d="M.5.5l12 12M12.500.5l-12 12" stroke="#000" /></svg>
        </div>
        <div className="h-[25px] flex items-center pl-[7px] pt-[3px] gap-[14px] text-[14.400px] text-[#1a1a1a]">
          <span>File</span>
          <span>Edit</span>
          <span>Navigate</span>
          <span>Search</span>
          <span>Project</span>
          <span>Run</span>
          <span>Window</span>
          <span>Help</span>
        </div>
      </div>
      <Toolbar />
      <div className="flex-1 min-h-0 flex">
        <ProjectExplorer />
        <div className="ml-[4px] flex-1 min-w-0 flex flex-col">
          <EditorArea />
          <ServersPanel />
        </div>
        <RightTrim />
      </div>
      <StatusBar />
      <Taskbar />
    </div>
  );
}
